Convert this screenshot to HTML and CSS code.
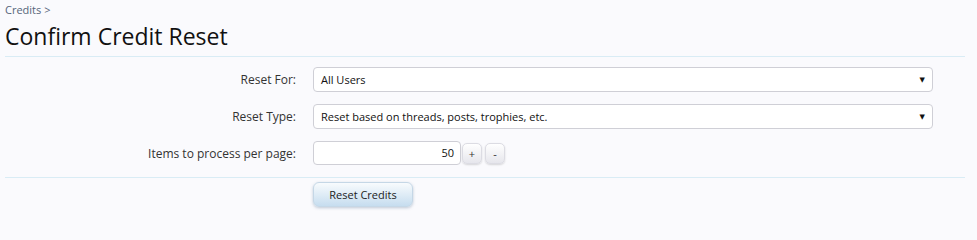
FILE: index.html
```html
<!DOCTYPE html>
<html>
<head>
<meta charset="utf-8">
<link rel="stylesheet" href="styles.css">
</head>
<body>
<div class="page">
  <div class="crumbs"><a href="#">Credits</a> &gt;</div>
  <h1 class="title">Confirm Credit Reset</h1>
  <form class="form">
    <div class="fields">
      <div class="row">
        <label class="label">Reset For:</label>
        <div class="select"><span>All Users</span><span class="arrow">&#9660;</span></div>
      </div>
      <div class="row">
        <label class="label">Reset Type:</label>
        <div class="select"><span>Reset based on threads, posts, trophies, etc.</span><span class="arrow">&#9660;</span></div>
      </div>
      <div class="row">
        <label class="label">Items to process per page:</label>
        <div class="spinner">
          <div class="num">50</div>
          <span class="spin">+</span>
          <span class="spin">-</span>
        </div>
      </div>
    </div>
    <div class="submit">
      <span class="button">Reset Credits</span>
    </div>
  </form>
</div>
</body>
</html>
```
FILE: styles.css
```css
html, body {
  margin: 0;
  padding: 0;
  background: #fafafd;
}
body {
  font-family: "Open Sans", "DejaVu Sans", sans-serif;
  font-size: 12px;
  color: #222;
}
.page {
  padding: 3px 12px 0 5px;
}
.crumbs {
  color: #56657a;
  font-size: 11px;
  line-height: 14px;
}
.crumbs a {
  color: #56657a;
  text-decoration: none;
}
.title {
  margin: 4px 0 0 0;
  font-size: 23px;
  font-weight: normal;
  line-height: 30px;
  color: #111;
  padding-bottom: 5px;
  border-bottom: 1px solid #d9ecf5;
}
.fields {
  padding-top: 10px;
  border-bottom: 1px solid #d9ecf5;
}
.row {
  display: flex;
  align-items: center;
  margin-bottom: 12px;
}
.label {
  width: 291px;
  text-align: right;
  padding-right: 17px;
  color: #333;
  font-size: 12px;
}
.select {
  width: 618px;
  height: 23px;
  box-sizing: content-box;
  border: 1px solid #cfcfd6;
  border-radius: 4px;
  background: #fff;
  display: flex;
  align-items: center;
  justify-content: space-between;
  font-size: 11px;
  color: #111;
}
.select span:first-child {
  padding-left: 7px;
}
.arrow {
  font-size: 7px;
  padding-right: 7px;
  color: #111;
}
.spinner {
  display: flex;
  align-items: center;
  gap: 3px;
}
.num {
  width: 140px;
  height: 22px;
  border: 1px solid #cfcfd6;
  border-radius: 4px;
  background: #fff;
  text-align: right;
  padding-right: 6px;
  line-height: 22px;
  font-size: 11px;
  color: #111;
}
.spin {
  display: inline-flex;
  align-items: center;
  justify-content: center;
  width: 18px;
  height: 19px;
  border: 1px solid #dcdce3;
  border-radius: 5px;
  background: linear-gradient(#ffffff, #e6e6ec);
  box-shadow: 0 1px 2px rgba(0,0,0,0.15);
  font-size: 11px;
  color: #333;
}
.spin:first-of-type {
  margin-left: -2px;
}
.submit {
  display: flex;
  padding-left: 308px;
}
.button {
  margin: 4px 0 4px 0;
  display: inline-flex;
  align-items: center;
  justify-content: center;
  width: 98px;
  height: 23px;
  border: 1px solid #c5d7e6;
  border-radius: 6px;
  background: linear-gradient(#f8fbfd, #c6ddef);
  box-shadow: 0 1px 3px rgba(80,110,140,0.35);
  font-size: 11px;
  color: #222;
}
```
